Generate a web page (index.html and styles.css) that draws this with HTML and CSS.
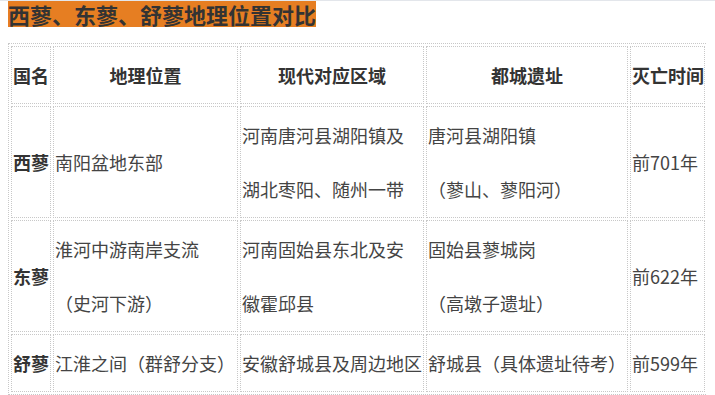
FILE: index.html
```html
<!DOCTYPE html>
<html lang="zh-CN">
<head>
<meta charset="utf-8">
<title>西蓼、东蓼、舒蓼地理位置对比</title>
<link rel="stylesheet" href="styles.css">
</head>
<body>
<div class="heading"><span class="heading-text">西蓼、东蓼、舒蓼地理位置对比</span></div>
<table class="compare">
  <thead>
    <tr>
      <th class="c1">国名</th>
      <th class="c2">地理位置</th>
      <th class="c3">现代对应区域</th>
      <th class="c4">都城遗址</th>
      <th class="c5">灭亡时间</th>
    </tr>
  </thead>
  <tbody>
    <tr>
      <td class="name">西蓼</td>
      <td>南阳盆地东部</td>
      <td>河南唐河县湖阳镇及<br>湖北枣阳、随州一带</td>
      <td>唐河县湖阳镇<br>（蓼山、蓼阳河）</td>
      <td>前701年</td>
    </tr>
    <tr>
      <td class="name">东蓼</td>
      <td>淮河中游南岸支流<br>（史河下游）</td>
      <td>河南固始县东北及安<br>徽霍邱县</td>
      <td>固始县蓼城岗<br>（高墩子遗址）</td>
      <td>前622年</td>
    </tr>
    <tr>
      <td class="name">舒蓼</td>
      <td>江淮之间（群舒分支）</td>
      <td>安徽舒城县及周边地区</td>
      <td>舒城县（具体遗址待考）</td>
      <td>前599年</td>
    </tr>
  </tbody>
</table>
</body>
</html>
```
FILE: styles.css
```css
html {
  border-top: 1px solid #e3e6eb;
  background: #fff;
}
body {
  margin: 0 8px;
  font-family: "Noto Sans CJK SC", "Noto Sans", sans-serif;
  color: #333;
}
.heading {
  margin: 0 0 16px 0;
  height: 26px;
}
.heading-text {
  display: inline-block;
  background: #e67e22;
  color: #333;
  font-size: 22px;
  font-weight: bold;
  line-height: 26px;
  height: 26px;
  white-space: nowrap;
}
.compare {
  width: 700px;
  table-layout: fixed;
  border: 1px dotted #c8c8c8;
  border-collapse: separate;
  border-spacing: 2px;
  font-size: 18px;
}
.compare th,
.compare td {
  box-sizing: border-box;
  border: 1px dotted #c8c8c8;
  padding: 1px;
  line-height: 54px;
  vertical-align: middle;
  white-space: nowrap;
  overflow: hidden;
}
.compare th {
  font-weight: bold;
  text-align: center;
  color: #333;
}
.compare td {
  text-align: left;
  color: #444;
}
.compare td.name {
  font-weight: bold;
  color: #333;
}
.c1 { width: 40px; }
.c2 { width: 185px; }
.c3 { width: 184px; }
.c4 { width: 202px; }
.c5 { width: 75px; }
```
